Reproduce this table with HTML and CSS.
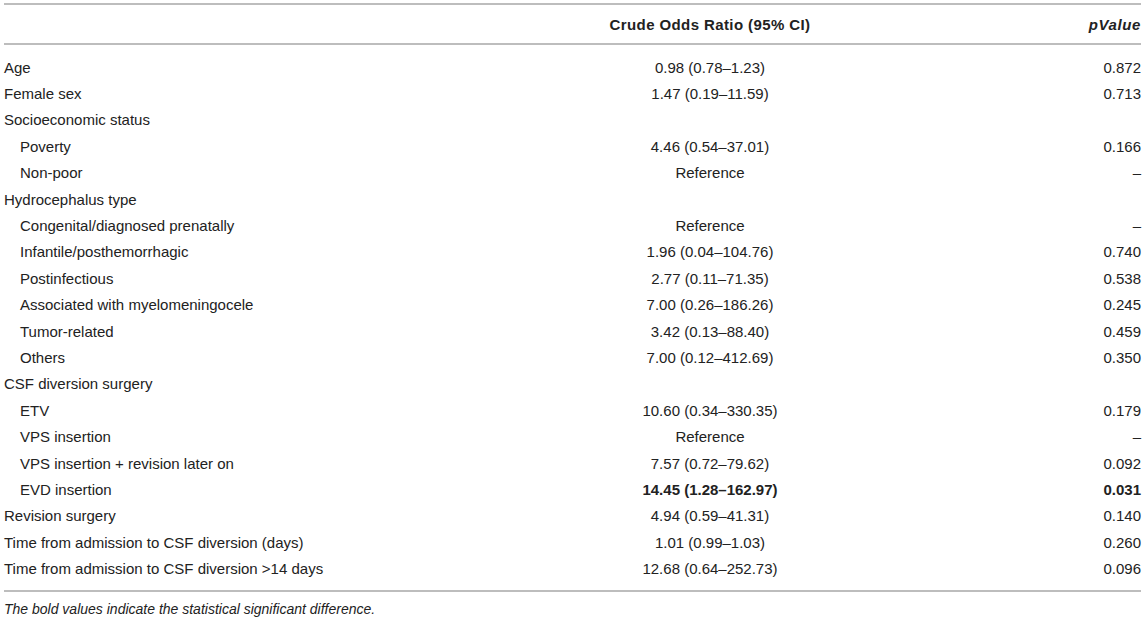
FILE: index.html
```html
<!DOCTYPE html>
<html>
<head>
<meta charset="utf-8">
<link rel="stylesheet" href="styles.css">
</head>
<body>
<div class="wrap">
<table class="tbl">
<colgroup><col class="c1"><col class="c2"><col class="c3"></colgroup>
<thead>
<tr><th class="lab"></th><th class="mid">Crude Odds Ratio (95% CI)</th><th class="pv"><i>pValue</i></th></tr>
</thead>
<tbody>
<tr class="first"><td class="lab">Age</td><td class="mid">0.98 (0.78–1.23)</td><td class="pv">0.872</td></tr>
<tr><td class="lab">Female sex</td><td class="mid">1.47 (0.19–11.59)</td><td class="pv">0.713</td></tr>
<tr><td class="lab">Socioeconomic status</td><td class="mid"></td><td class="pv"></td></tr>
<tr><td class="lab sub">Poverty</td><td class="mid">4.46 (0.54–37.01)</td><td class="pv">0.166</td></tr>
<tr><td class="lab sub">Non-poor</td><td class="mid">Reference</td><td class="pv">–</td></tr>
<tr><td class="lab">Hydrocephalus type</td><td class="mid"></td><td class="pv"></td></tr>
<tr><td class="lab sub">Congenital/diagnosed prenatally</td><td class="mid">Reference</td><td class="pv">–</td></tr>
<tr><td class="lab sub">Infantile/posthemorrhagic</td><td class="mid">1.96 (0.04–104.76)</td><td class="pv">0.740</td></tr>
<tr><td class="lab sub">Postinfectious</td><td class="mid">2.77 (0.11–71.35)</td><td class="pv">0.538</td></tr>
<tr><td class="lab sub">Associated with myelomeningocele</td><td class="mid">7.00 (0.26–186.26)</td><td class="pv">0.245</td></tr>
<tr><td class="lab sub">Tumor-related</td><td class="mid">3.42 (0.13–88.40)</td><td class="pv">0.459</td></tr>
<tr><td class="lab sub">Others</td><td class="mid">7.00 (0.12–412.69)</td><td class="pv">0.350</td></tr>
<tr><td class="lab">CSF diversion surgery</td><td class="mid"></td><td class="pv"></td></tr>
<tr><td class="lab sub">ETV</td><td class="mid">10.60 (0.34–330.35)</td><td class="pv">0.179</td></tr>
<tr><td class="lab sub">VPS insertion</td><td class="mid">Reference</td><td class="pv">–</td></tr>
<tr><td class="lab sub">VPS insertion + revision later on</td><td class="mid">7.57 (0.72–79.62)</td><td class="pv">0.092</td></tr>
<tr><td class="lab sub">EVD insertion</td><td class="mid"><b>14.45 (1.28–162.97)</b></td><td class="pv"><b>0.031</b></td></tr>
<tr><td class="lab">Revision surgery</td><td class="mid">4.94 (0.59–41.31)</td><td class="pv">0.140</td></tr>
<tr><td class="lab">Time from admission to CSF diversion (days)</td><td class="mid">1.01 (0.99–1.03)</td><td class="pv">0.260</td></tr>
<tr class="last"><td class="lab">Time from admission to CSF diversion &gt;14 days</td><td class="mid">12.68 (0.64–252.73)</td><td class="pv">0.096</td></tr>
</tbody>
</table>
<p class="note">The bold values indicate the statistical significant difference.</p>
</div>
</body>
</html>
```
FILE: styles.css
```css
html, body { margin: 0; padding: 0; background: #fff; }
body { font-family: "Liberation Sans", Arial, sans-serif; color: #222; }
.wrap { padding: 3px 4px 0 4px; }
.tbl { width: 1137px; border-collapse: collapse; font-size: 15px; line-height: 17px; }
.c1 { width: 480px; }
.c2 { width: 452px; }
.c3 { width: 205px; }
.tbl thead th { border-top: 2px solid #bdbdbd; border-bottom: 2px solid #bdbdbd; height: 38px; padding: 0; font-weight: bold; vertical-align: middle; letter-spacing: 0.4px; }
.tbl td { padding: 0; height: 26.4px; vertical-align: middle; }
.tbl tr.first td { padding-top: 9px; }
.tbl tr.last td { padding-bottom: 8px; border-bottom: 2px solid #bdbdbd; }
.lab { text-align: left; }
.sub { padding-left: 16px !important; }
.mid { text-align: center; }
.pv { text-align: right; }
.pv i { font-weight: bold; letter-spacing: 0.6px; }
.note { margin: 9px 0 0 0; font-size: 14px; font-style: italic; line-height: 16px; }
```
